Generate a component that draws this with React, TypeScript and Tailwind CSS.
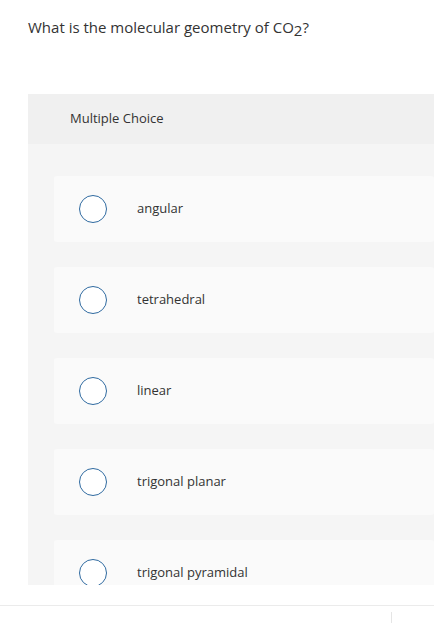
import React from "react";

const options = ["angular", "tetrahedral", "linear", "trigonal planar", "trigonal pyramidal"];

export default function App() {
  return (
    <div
      className="w-[434px] h-[623px] overflow-hidden bg-white text-[#333]"
      style={{ fontFamily: '"Open Sans", "Liberation Sans", sans-serif' }}
    >
      <div className="pl-[28px] pt-[17px] h-[94px]">
        <p className="text-[15px] leading-[20px]">
          What is the molecular geometry of CO<sub className="text-[15px] relative top-[3px] align-baseline">2</sub>?
        </p>
      </div>
      <div className="ml-[28px] h-[491px] overflow-hidden bg-[#f5f5f5]">
        <div className="h-[50px] bg-[#f0f0f0] flex items-center pl-[42px] text-[13px]">
          Multiple Choice
        </div>
        <div className="flex flex-col gap-[25px] pt-[32px] pl-[26px]">
          {options.map((o) => (
            <div key={o} className="h-[66px] shrink-0 bg-[#fafafa] rounded-[3px] flex items-center">
              <div className="ml-[25px] w-[28px] h-[28px] rounded-full border-[1.5px] border-[#2f6aa0] bg-white" />
              <span className="ml-[30px] text-[13px]">{o}</span>
            </div>
          ))}
        </div>
      </div>
      <div className="h-[20px]" />
      <div className="border-t border-[#ebebeb] h-[18px] flex justify-end">
        <div className="mt-[6px] mr-[42px] w-px h-[12px] bg-[#e5e5e5]" />
      </div>
    </div>
  );
}
